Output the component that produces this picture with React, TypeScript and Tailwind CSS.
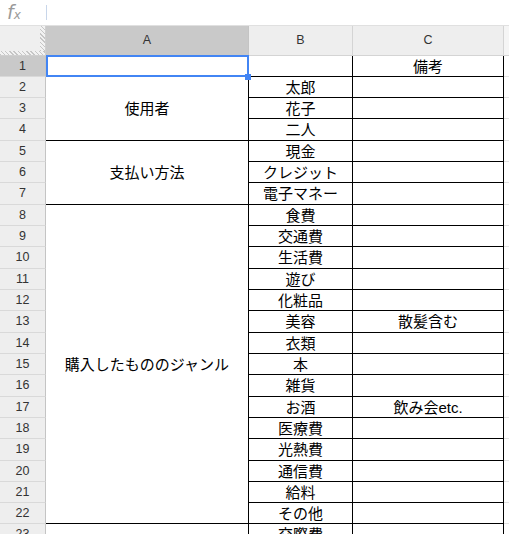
import React from 'react';

const colB = ['', '太郎', '花子', '二人', '現金', 'クレジット', '電子マネー', '食費', '交通費', '生活費', '遊び', '化粧品', '美容', '衣類', '本', '雑貨', 'お酒', '医療費', '光熱費', '通信費', '給料', 'その他', '交際費'];

const colC: Record<number, string> = { 1: '備考', 13: '散髪含む', 17: '飲み会etc.' };

// merged cells in column A, keyed by start row
const mergedA: Record<number, { span: string; text: string }> = {
  1: { span: '', text: '' },
  2: { span: 'row-span-3', text: '使用者' },
  5: { span: 'row-span-3', text: '支払い方法' },
  8: { span: 'row-span-15', text: '購入したもののジャンル' },
  23: { span: '', text: '' },
};

const cellFont = "font-['Liberation_Sans','Noto_Sans_CJK_JP',sans-serif] text-[15px] leading-none text-black";
const headFont = "font-['Liberation_Sans',sans-serif] text-[12.5px] text-[#333]";

export default function App() {
  const rows = Array.from({ length: 23 }, (_, i) => i + 1);

  return (
    <div className="w-[509px] h-[534px] overflow-hidden bg-white">
      {/* formula bar */}
      <div className="h-[26px] flex items-center border-b border-[#e0e0e0]">
        <div className="w-[46px] flex items-end pl-[7px] font-['DejaVu_Sans',sans-serif] italic text-[#9a9a9a]">
          <span className="text-[19px] leading-none">f</span>
          <span className="text-[12px] leading-none mb-[1px]">x</span>
        </div>
        <div className="w-px h-[15px] bg-[#c8d6ea]" />
      </div>

      <div className="grid grid-cols-[46px_203px_104px_151px_1fr] grid-rows-[30px_21px_21px_21px_22px_21px_21px_22px_21px_21px_22px_21px_21px_22px_21px_21px_22px_21px_21px_22px_21px_21px_21px_21px]">
        {/* corner */}
        <div className="col-start-1 flex flex-col bg-[#efefef] border-r border-b border-[#cfcfcf]">
          <div className="flex-1 flex">
            <div className="flex-1" />
            <div className="w-[5px] bg-[repeating-linear-gradient(45deg,#c6c6c6_0px,#c6c6c6_1px,#f2f2f2_1px,#f2f2f2_3px)]" />
          </div>
          <div className="h-[4px] bg-[repeating-linear-gradient(45deg,#c6c6c6_0px,#c6c6c6_1px,#f2f2f2_1px,#f2f2f2_3px)]" />
        </div>
        <div className={`col-start-2 flex items-center justify-center bg-[#c9c9c9] border-r border-b border-[#c4c4c4] ${headFont}`}>A</div>
        <div className={`col-start-3 flex items-center justify-center bg-[#eeeeee] border-r border-b border-[#d4d4d4] ${headFont}`}>B</div>
        <div className={`col-start-4 flex items-center justify-center bg-[#eeeeee] border-r border-b border-[#d4d4d4] ${headFont}`}>C</div>
        <div className="col-start-5 bg-[#f5f5f5] border-b border-[#d4d4d4]" />

        {rows.map((r) => {
          const a = mergedA[r];
          return (
            <React.Fragment key={r}>
              <div
                className={`col-start-1 flex items-center justify-center border-r border-b border-r-[#c4c4c4] border-b-[#d9d9d9] ${headFont} ${r === 1 ? 'bg-[#c9c9c9]' : 'bg-[#eeeeee]'}`}
              >
                {r}
              </div>
              {a && (
                <div className={`col-start-2 ${a.span} relative flex items-center justify-center border-r border-b border-black ${cellFont}`}>
                  {a.text}
                  {r === 1 && (
                    <>
                      <div className="absolute left-0 top-[-1px] right-[-1px] bottom-[-1px] border-2 border-[#4285f4] z-10" />
                      <div className="absolute right-[-3px] bottom-[-4px] w-[6px] h-[6px] bg-[#4285f4] z-20" />
                    </>
                  )}
                </div>
              )}
              <div className={`col-start-3 flex items-center justify-center border-r border-b border-black ${cellFont}`}>
                {colB[r - 1]}
              </div>
              <div className={`col-start-4 flex items-center justify-center border-r border-b border-black ${cellFont}`}>
                {colC[r] ?? ''}
              </div>
              <div className="col-start-5 border-b border-[#e2e2e2]" />
            </React.Fragment>
          );
        })}
      </div>
    </div>
  );
}
